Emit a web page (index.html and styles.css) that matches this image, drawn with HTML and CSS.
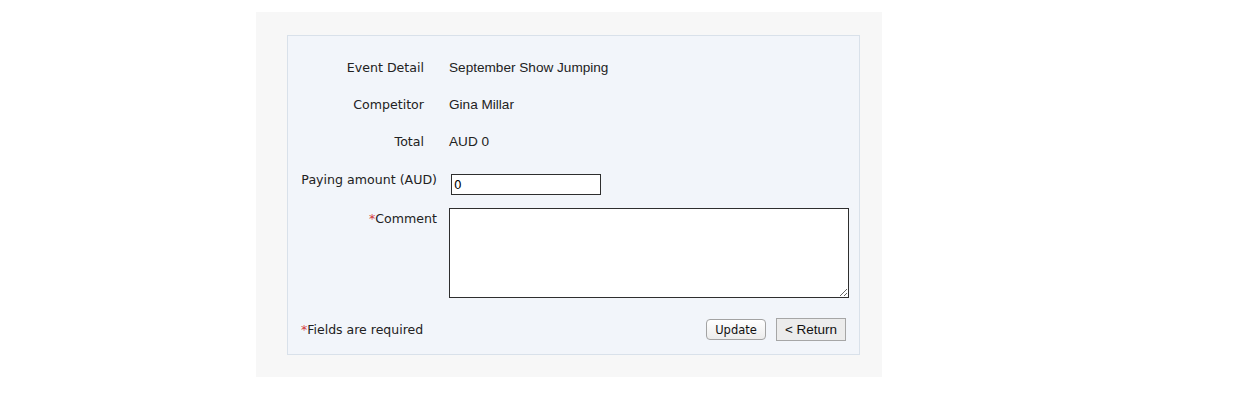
FILE: index.html
```html
<!DOCTYPE html>
<html lang="en">
<head>
    <meta charset="UTF-8">
    <title>Payment Update</title>
    <link rel="stylesheet" href="styles.css">
</head>
<body>
    <div class="page">
        <div class="panel">
            <form class="payment-form">
                <div class="row info">
                    <label class="label">Event Detail</label>
                    <span class="value">September Show Jumping</span>
                </div>
                <div class="row info">
                    <label class="label">Competitor</label>
                    <span class="value">Gina Millar</span>
                </div>
                <div class="row info">
                    <label class="label">Total</label>
                    <span class="value">AUD 0</span>
                </div>
                <div class="row amount">
                    <label class="label" for="amount">Paying amount (AUD)</label>
                    <input type="text" id="amount" class="text-input" value="0">
                </div>
                <div class="row comment">
                    <label class="label" for="comment"><span class="req">*</span>Comment</label>
                    <textarea id="comment" class="text-area"></textarea>
                </div>
                <div class="footer">
                    <span class="note"><span class="req">*</span>Fields are required</span>
                    <div class="buttons">
                        <button type="button" class="btn-update">Update</button>
                        <button type="button" class="btn-return">&lt; Return</button>
                    </div>
                </div>
            </form>
        </div>
    </div>
</body>
</html>
```

FILE: styles.css
```css
/* General Styling */
body {
    margin: 0;
    padding: 0;
    background-color: #fff;
    color: #222;
    font-family: "DejaVu Sans", Verdana, sans-serif;
}

.page {
    width: 573px;
    margin: 12px 0 0 256px;
    padding: 23px 22px 22px 31px;
    background-color: #f7f7f7;
}

.panel {
    background-color: #f2f5fa;
    border: 1px solid #d9e1ea;
    box-sizing: border-box;
    height: 320px;
    padding: 13px 11px 0 13px;
}

.row {
    display: grid;
    grid-template-columns: 136px 400px;
    column-gap: 12px;
}

.label {
    font-size: 12.6px;
    line-height: 16px;
    text-align: right;
    white-space: nowrap;
}

.info {
    height: 37px;
    align-items: center;
}

.info .label {
    padding-right: 13px;
}

.value {
    font-family: "Liberation Sans", Arial, sans-serif;
    font-size: 13.6px;
    line-height: 16px;
}

.amount {
    padding-top: 14px;
}

.amount .label {
    margin-top: -2px;
}

.text-input {
    width: 150px;
    height: 21px;
    margin-left: 2px;
    box-sizing: border-box;
    border: 1px solid #2e2e2e;
    padding: 1px 2px 0;
    font-family: "DejaVu Sans", Verdana, sans-serif;
    font-size: 12px;
    background-color: #fff;
}

.comment {
    padding-top: 13px;
}

.comment .label {
    margin-top: 3px;
}

.text-area {
    width: 400px;
    height: 90px;
    box-sizing: border-box;
    border: 1px solid #2e2e2e;
    background-color: #fff;
    margin: 0;
    display: block;
}

.req {
    color: #d43a3a;
}

.footer {
    display: flex;
    justify-content: space-between;
    align-items: center;
    width: 545px;
    margin-top: 20px;
}

.note {
    font-size: 12.5px;
    line-height: 16px;
}

.buttons {
    display: flex;
    align-items: center;
    gap: 10px;
}

.btn-update {
    width: 60px;
    height: 21px;
    padding: 0;
    border: 1px solid #a3a3a3;
    border-radius: 4px;
    background: linear-gradient(#ffffff, #ececec);
    font-family: "DejaVu Sans", Verdana, sans-serif;
    font-size: 11.5px;
    color: #111;
}

.btn-return {
    width: 70px;
    height: 23px;
    padding: 0;
    border: 1px solid #a6a6a6;
    background-color: #ececec;
    font-family: "Liberation Sans", Arial, sans-serif;
    font-size: 13.5px;
    color: #111;
}
```
